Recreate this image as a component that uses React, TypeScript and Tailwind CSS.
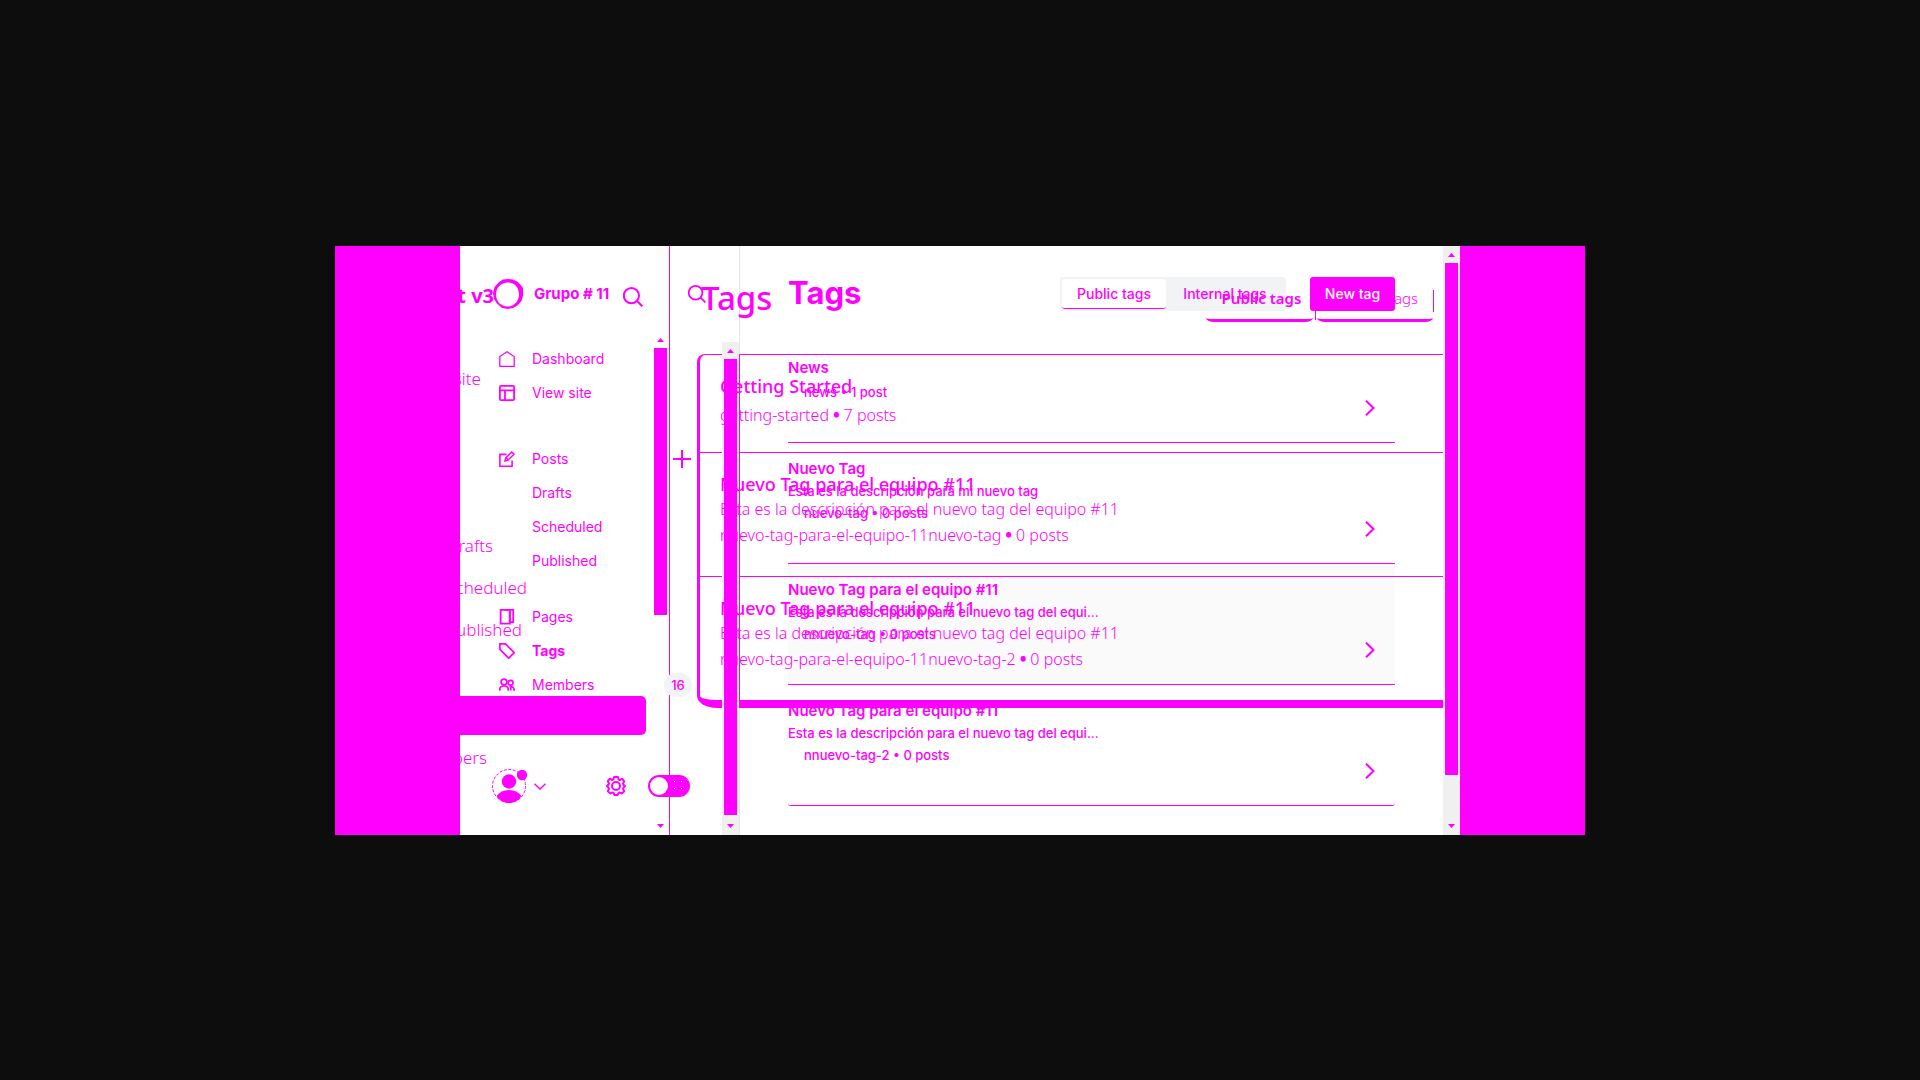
import React from "react";

type NavItem = { label: string; icon?: "home" | "layout" | "edit" | "pages" | "tag" | "members"; tail?: "plus" | "count"; active?: boolean; gap?: string };

const navItems: NavItem[] = [
  { label: "Dashboard", icon: "home" },
  { label: "View site", icon: "layout" },
  { label: "Posts", icon: "edit", tail: "plus", gap: "mt-8" },
  { label: "Drafts" },
  { label: "Scheduled" },
  { label: "Published" },
  { label: "Pages", icon: "pages", gap: "mt-[22px]" },
  { label: "Tags", icon: "tag", active: true },
  { label: "Members", icon: "members", tail: "count" },
];

const tagRows = [
  { title: "News", slug: "news", count: "1 post" },
  { title: "Nuevo Tag", description: "Esta es la descripción para mi nuevo tag", slug: "nuevo-tag", count: "0 posts" },
  { title: "Nuevo Tag para el equipo #11", description: "Esta es la descripción para el nuevo tag del equi...", slug: "nnuevo-tag", count: "0 posts", hovered: true },
  { title: "Nuevo Tag para el equipo #11", description: "Esta es la descripción para el nuevo tag del equi...", slug: "nnuevo-tag-2", count: "0 posts" },
];

const shiftedRows = [
  { title: "Getting Started", slug: "getting-started", count: "7 posts" },
  { title: "Nuevo Tag para el equipo #11", description: "Esta es la descripción para el nuevo tag del equipo #11", slug: "nuevo-tag-para-el-equipo-11nuevo-tag", count: "0 posts" },
  { title: "Nuevo Tag para el equipo #11", description: "Esta es la descripción para el nuevo tag del equipo #11", slug: "nuevo-tag-para-el-equipo-11nuevo-tag-2", count: "0 posts" },
];

function Scrollbar({ thumb, track = "" }: { thumb: string; track?: string }) {
  return (
    <div className={`flex w-[17px] shrink-0 flex-col items-center ${track}`} aria-hidden="true">
      <svg className="h-[17px] w-[17px] shrink-0" viewBox="0 0 17 17" fill="currentColor"><path d="M5 11h7L8.5 7z" /></svg>
      <div className={`w-[13px] bg-[#ff00ff] ${thumb}`} />
      <svg className="mt-auto h-[17px] w-[17px] shrink-0" viewBox="0 0 17 17" fill="currentColor"><path d="M5 6h7L8.5 10z" /></svg>
    </div>
  );
}

function NavIcon({ name }: { name: NavItem["icon"] }) {
  return (
    <svg className="h-4 w-4 shrink-0" viewBox="0 0 16 16" fill="none" stroke="currentColor" strokeWidth="1.3">
      {name === "home" && <path d="M.8 15.4V5.5L8 .8l7.2 4.7v9.9z" />}
      {name === "layout" && <><rect x=".9" y=".9" width="14.2" height="14.2" rx="1" strokeWidth="1.8" /><path d="M1 5.3h14M6 5.3V15" strokeWidth="1.8" /></>}
      {name === "edit" && <><path d="M7.5 3.4H.9v11.8h12.2V9.5" strokeWidth="1.6" /><path d="M6 10l.7-3 6-6 2.3 2.2-6 6zM7 6.8l2 2.2" strokeWidth="1.5" /></>}
      {name === "pages" && <><path d="M1.6.9h9.2v13.7H1.6z" strokeWidth="1.8" /><path d="M6 .9h8.2v12.2h-3.4M10.8 1v14" strokeWidth="1.8" /></>}
      {name === "tag" && <path d="M.9.9h5.6L15.2 9.7 9.7 15.2.9 6.4z" strokeWidth="1.7" />}
      {name === "members" && <><circle cx="5" cy="5" r="2.9" strokeWidth="1.7" /><circle cx="11.6" cy="5.8" r="2.4" strokeWidth="1.7" /><path d="M.8 13.8V12C1 10 2.5 9 5 9s4 1 4.2 3v1.8M10.5 9.8c3-.6 4.7.6 4.7 4M11.8 13.5V10" strokeWidth="1.7" /></>}
    </svg>
  );
}

function SearchIcon({ className }: { className: string }) {
  return (
    <svg className={className} viewBox="0 0 20 20" fill="none" stroke="currentColor" strokeWidth="2">
      <circle cx="8.4" cy="8.6" r="7.6" />
      <path d="M14 14l5.4 5.4" />
    </svg>
  );
}

function Sidebar() {
  return (
    <aside className="flex w-[280px] shrink-0 flex-col border-r border-[#e5e5e5]">
      <header className="flex h-24 items-center pr-24 pl-[33px]">
        <svg className="h-[30px] w-[30px] shrink-0" viewBox="0 0 30 30" fill="currentColor">
          <path fillRule="evenodd" d="M15 0l5 .6 5 2.400 3.500 4L30 9v8l-1.500 5-4 4.500L20 29l-5 1-6-1-5-4.500L1 20 0 14l1.500-6L6 3l4-2.500zM15 3.500C8 3.500 3 8.500 3 15.500S8 27.500 14.500 27.500 26 22 26 15.500 22 3.500 15 3.500z" />
        </svg>
        <span className="ml-[11px] text-[15px] leading-5 font-bold whitespace-nowrap">Grupo # 11</span>
        <button type="button" aria-label="Search" className="mt-[6px] ml-auto"><SearchIcon className="h-5 w-5" /></button>
      </header>
      <div className="flex flex-1">
        <div className="flex min-w-0 flex-1 flex-col">
          <nav>
            {navItems.map((item) => (
              <a key={item.label} href="#" className={`flex h-[34px] items-center pl-[39px] text-sm ${item.tail === "plus" ? "pr-[31px]" : "pr-[30px]"} ${item.gap ?? ""} ${item.active ? "font-bold" : ""}`}>
                {item.icon ? <NavIcon name={item.icon} /> : <span className="w-4" />}
                <span className="ml-[17px]">{item.label}</span>
                {item.tail === "plus" && <svg className="ml-auto h-[18px] w-[18px]" viewBox="0 0 18 18" stroke="currentColor" strokeWidth="2"><path d="M9 0v18M0 9h18" /></svg>}
                {item.tail === "count" && <span className="relative z-20 ml-auto flex h-6 w-7 items-center justify-center rounded-full bg-[#f1f3f4] text-[13px] font-medium">16</span>}
              </a>
            ))}
          </nav>
          <footer className="mt-auto flex items-center pr-8 pb-8 pl-8">
            <button type="button" aria-label="Account" className="flex items-center gap-2">
              <svg className="h-[34px] w-[34px] overflow-visible" viewBox="0 0 34 34" fill="currentColor">
                <circle cx="17" cy="17" r="16.500" fill="none" stroke="currentColor" strokeDasharray="3 1.500" />
                <circle cx="17" cy="12.500" r="7.200" />
                <path d="M4.500 27c3-4 7-6 12.500-6s9.500 2 12.500 6c-3 4.500-7.500 7-12.500 7s-9.500-2.500-12.500-7z" />
                <circle cx="30" cy="6" r="5.200" />
              </svg>
              <svg className="h-[7px] w-3" viewBox="0 0 12 7" fill="none" stroke="currentColor" strokeWidth="1.400"><path d="M.5.700L6 6l5.500-5.300" /></svg>
            </button>
            <button type="button" aria-label="Settings" className="ml-auto">
              <svg className="h-5 w-5" viewBox="0 0 20 20" fill="none" stroke="currentColor" strokeWidth="2" strokeLinejoin="round">
                <path d="M8.100 1h3.800l.700 2.500 1.300.600 2.300-1.300 2 2.600-1.200 2.300.500 1.200L19 10l-1.500 1.700-.5 1 1.200 2.500-2.400 2.200-2.200-.9-1.200.6L11.500 19h-3l-.9-2-1.200-.6-2.200 1-2.400-2.300 1.200-2.400-.5-1L1 10l1.500-1.400.5-1.200-1.200-2.200 2-2.500 2.400 1.300 1.200-.6z" />
                <circle cx="10" cy="10" r="4" />
              </svg>
            </button>
            <button type="button" role="switch" aria-checked="false" aria-label="Night mode" className="ml-[22px]">
              <svg className="h-[22px] w-[42px]" viewBox="0 0 42 22">
                <rect width="42" height="22" rx="11" fill="#ff00ff" />
                <circle cx="11" cy="11" r="9" fill="#fff" />
                <path d="M26 6h1v1h-1zM33 6h1v1h-1zM26 13h1v1h-1zM33 13h1v1h-1z" fill="#fff" />
              </svg>
            </button>
          </footer>
        </div>
        <div className="relative z-20 flex"><Scrollbar track="bg-[#f0f0f0]" thumb="h-[456px]" /></div>
      </div>
    </aside>
  );
}

function CurrentLayer() {
  return (
    <div className="col-start-1 row-start-1 flex min-w-0 font-[Inter,sans-serif]">
      <Sidebar />
      <main className="min-w-0 flex-1 px-12">
        <header className="flex h-[76px] items-start pt-[31px]">
          <h1 className="-mt-[2px] text-[31px] leading-9 font-bold">Tags</h1>
          <div className="ml-auto flex h-[34px] rounded-[3px] bg-[#f1f3f4] p-[2px] text-sm font-medium">
            <button type="button" className="w-[104px] rounded-[3px] border-b border-[#ff00ff] bg-white">Public tags</button>
            <button type="button" className="w-[118px]">Internal tags</button>
          </div>
          <button type="button" className="relative z-20 ml-6 h-[34px] w-[85px] rounded-[3px] bg-[#ff00ff] text-sm font-medium text-white">New tag</button>
        </header>
        <ul>
          {tagRows.map((row, i) => (
            <li key={i} className={`flex h-[121px] items-end border-b border-[#ff00ff] last:rounded-b-[3px] ${row.hovered ? "bg-[#fafafa]" : ""}`}>
              <a href="#" className="flex flex-1 items-end justify-between pr-5">
                <div className="pb-[39px] leading-[22px]">
                  <h3 className={`text-[15px] font-semibold ${row.description ? "" : "mb-[2px]"}`}>{row.title}</h3>
                  {row.description && <p className="text-[13px] font-medium">{row.description}</p>}
                  <p className="pl-4 text-[13px] font-medium">{row.slug} • {row.count}</p>
                </div>
                <svg className="mb-[26px] h-4 w-[10px]" viewBox="0 0 10 16" fill="none" stroke="currentColor" strokeWidth="2"><path d="M1 .700L8.500 8 1 15.300" /></svg>
              </a>
            </li>
          ))}
        </ul>
      </main>
      <Scrollbar track="bg-[#f0f0f0]" thumb="h-[512px]" />
    </div>
  );
}

function ShiftedLayer() {
  return (
    <div className="col-start-1 row-start-1 flex min-w-0 font-['Noto_Sans',sans-serif]">
      <aside className="flex w-[210px] shrink-0 flex-col border-r border-[#ff00ff]">
        <div className="flex h-[85px] items-center justify-end pt-[15px] pr-[175px] text-[20px] font-bold whitespace-nowrap">t v3</div>
        <div className="flex flex-1">
          <nav className="flex min-w-0 flex-1 flex-col pt-[27px] text-[17px] font-light">
            <a href="#" className="flex h-[42px] w-[21px] items-center justify-end overflow-hidden">site</a>
            <a href="#" className="mt-[125px] flex h-[42px] w-[33px] items-center justify-end overflow-hidden">rafts</a>
            <a href="#" className="flex h-[42px] w-[67px] items-center justify-end overflow-hidden">cheduled</a>
            <a href="#" className="flex h-[42px] w-[62px] items-center justify-end overflow-hidden">ublished</a>
            <a href="#" aria-label="Selected section" className="mt-[45px] mr-[6px] h-[39px] rounded-r-[5px] bg-[#ff00ff]" />
            <a href="#" className="mt-[2px] flex h-[42px] w-[27px] items-center justify-end overflow-hidden">bers</a>
          </nav>
          <Scrollbar thumb="h-[267px]" />
        </div>
      </aside>
      <main className="mr-[17px] min-w-0 flex-1">
        <header className="flex h-[108px] items-start pl-[18px]">
          <SearchIcon className="mt-[39px] h-[18px] w-[18px]" />
          <h2 className="mt-8 -ml-[5px] text-[33px] leading-10 font-medium">Tags</h2>
          <div className="mt-11 mr-[9px] ml-auto flex text-[15px] leading-4">
            <button type="button" className="h-8 w-[107px] rounded-b-[8px_4px] border-b-[3px] border-[#ff00ff] pb-[14px] pl-1 font-semibold">Public tags</button>
            <div className="ml-[2px] h-[30px] w-px bg-[#ff00ff]" />
            <button type="button" className="ml-px h-8 w-[116px] rounded-b-[8px_4px] border-b-[3px] border-[#ff00ff] pr-[15px] pb-[14px] text-right font-light">ags</button>
            <div className="h-[22px] w-px bg-[#ff00ff]" />
          </div>
        </header>
        <section className="relative ml-[27px] rounded-tl-lg rounded-bl-[20px_12px] border-t border-b-8 border-l-[3px] border-[#ff00ff]">
          <div className="absolute inset-y-0 left-[39px] w-px bg-[#ff00ff]" />
          {shiftedRows.map((row, i) => (
            <article key={i} className={`pt-[18px] pl-5 leading-[26px] whitespace-nowrap ${row.description ? "h-[124px]" : "h-[97px]"} ${i > 0 ? "border-t border-[#ff00ff]" : ""}`}>
              <div className="relative z-30">
                <h3 className="text-[18px] font-medium">{row.title}</h3>
                {row.description && <p className="text-base font-light">{row.description}</p>}
                <p className={`text-base font-light ${row.description ? "mt-[2px]" : "mt-1"}`}>{row.slug} <span className="font-black">•</span> {row.count}</p>
              </div>
            </article>
          ))}
        </section>
      </main>
    </div>
  );
}

export default function App() {
  return (
    <div className="flex min-h-screen items-center justify-center bg-[#0d0d0d] pt-px text-[#ff00ff]">
      <div className="flex min-h-[589px] w-full max-w-[1250px] bg-[#ff00ff] px-[125px]">
        <div className="isolate grid min-w-0 flex-1 grid-cols-1 bg-white">
          <CurrentLayer />
          <ShiftedLayer />
        </div>
      </div>
    </div>
  );
}
